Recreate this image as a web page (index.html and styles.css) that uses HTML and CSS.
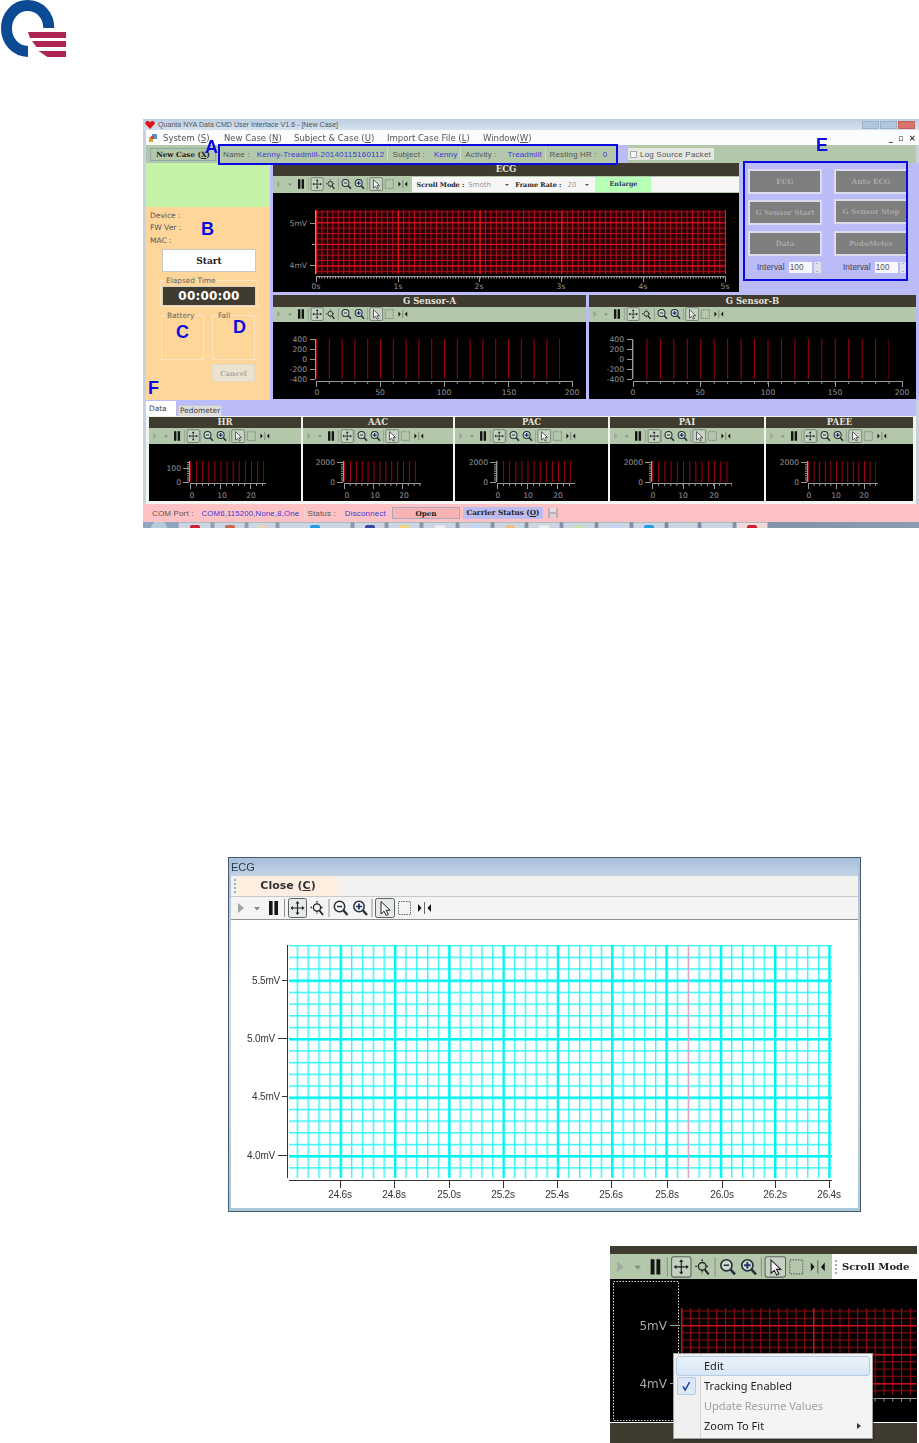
FILE: index.html
```html
<!DOCTYPE html>
<html lang="en">
<head>
<meta charset="utf-8">
<title>Quanta NYA Data CMD User Interface</title>
<link rel="stylesheet" href="styles.css">
</head>
<body>
<svg class="sprite" aria-hidden="true">
  <defs>
    <g id="tb-a">
      <path d="M3 7l6 5-6 5z" fill="#9fa8a0"/>
      <path d="M19 11h6l-3 3.5z" fill="#808880"/>
      <path d="M34 5h3.6v14H34zM39.4 5H43v14h-3.6z" fill="#151515"/>
      <path d="M49.5 3v18" stroke="#8a948a"/>
      <rect x="53.5" y="2.5" width="18" height="19" rx="2" fill="#d8ddd8" fill-opacity=".45" stroke="#5c6660"/>
      <path d="M56.5 12h12M62.5 6v12" stroke="#222" stroke-width="1.1"/>
      <path d="M62.5 5l-2 2.5h4zM62.5 19l-2-2.5h4zM55.500 12l2.500-2v4zM69.500 12l-2.500-2v4z" fill="#222"/>
    </g>
    <g id="tb-za">
      <circle cx="82" cy="11.500" r="3.600" fill="none" stroke="#222" stroke-width="1.300"/>
      <path d="M82 5v3M82 15v3M75.500 11.500h2.500M86 11.500h2.500" stroke="#222" stroke-width="1.300" stroke-dasharray="1.500 1"/>
      <path d="M84.500 14.500l3.500 4.500" stroke="#222" stroke-width="1.800"/>
    </g>
    <g id="tb-b">
      <path d="M94 3v18" stroke="#8a948a"/>
      <circle cx="104.500" cy="10.500" r="5.200" fill="#fff" fill-opacity=".35" stroke="#24303c" stroke-width="1.500"/>
      <path d="M102 10.500h5" stroke="#24303c" stroke-width="1.500"/>
      <path d="M108.500 14.500l4 4.500" stroke="#24303c" stroke-width="2.300"/>
      <circle cx="124" cy="10.500" r="5.200" fill="#fff" fill-opacity=".35" stroke="#24303c" stroke-width="1.500"/>
      <path d="M121 10.500h6M124 7.500v6" stroke="#1a2e70" stroke-width="1.700"/>
      <path d="M128 14.500l4 4.500" stroke="#24303c" stroke-width="2.300"/>
      <path d="M137 3v18" stroke="#8a948a"/>
      <rect x="140.500" y="2.500" width="19" height="19" rx="2" fill="#d8ddd8" fill-opacity=".5" stroke="#5c6660"/>
      <path d="M146 5.500v12.500l3-2.800 2.300 4.300 2-1-2.200-4.200h4z" fill="#f4f6f4" stroke="#222"/>
      <rect x="163.500" y="5.500" width="12" height="13" fill="none" stroke="#666" stroke-dasharray="1.500 1"/>
      <path d="M183 8v8l3.500-4zM196 8v8l-3.500-4z" fill="#151515"/>
      <path d="M189.500 6v12" stroke="#666"/>
    </g>
    <symbol id="tools" viewBox="0 0 198 24">
      <use href="#tb-a"/><use href="#tb-za"/><use href="#tb-b"/>
    </symbol>
    <symbol id="tools-s" viewBox="0 0 177 24">
      <use href="#tb-a"/><use href="#tb-b" x="-20.800"/>
    </symbol>
  </defs>
</svg>

<header class="logo-row">
  <svg class="logo" viewBox="0 0 67 58" role="img" aria-label="Quanta logo">
    <path d="M48.800 28C48.800 15 39.500 5.600 27.500 5.600S6.500 15.500 6.500 28.500 16 51.400 28 51.400" fill="none" stroke="#0c4a94" stroke-width="11"/>
    <path d="M28 32h38v6H30zM32 41h34v6H36.500zM38.500 51H66v6H47.500z" fill="#ae2450"/>
  </svg>
</header>

<figure class="app">
  <div class="win-title">
    <svg class="heart" viewBox="0 0 12 10"><path d="M6 10L.6 4.200C-.8 2 1 0 3 0c1.300 0 2.400.8 3 1.800C6.600.8 7.700 0 9 0c2 0 3.800 2 2.400 4.200z" fill="#e01418"/></svg>
    <span class="win-name">Quanta NYA Data CMD User Interface V1.6 - [New Case]</span>
    <span class="win-btns"><i class="wb"></i><i class="wb"></i><i class="wb wb-x"></i></span>
  </div>
  <nav class="menu">
    <svg class="menu-ic" viewBox="0 0 8 8"><path d="M0 3h4v5H0z" fill="#e0a030"/><path d="M3 0h5v5H3z" fill="#6090d0"/><path d="M2 2h3v3H2z" fill="#d04040"/></svg>
    <span class="m1">System (<u>S</u>)</span>
    <span class="m2">New Case (<u>N</u>)</span>
    <span class="m3">Subject &amp; Case (<u>U</u>)</span>
    <span class="m4">Import Case File (<u>L</u>)</span>
    <span class="m5">Window(<u>W</u>)</span>
    <span class="mdi">_&#9643;&#215;</span>
  </nav>
  <div class="bar">
    <button class="newcase" type="button">New Case (<u>X</u>)</button>
    <div class="info">
      <span class="lbl">Name :</span><b class="val v-name">Kenny-Treadmill-20140115160112</b><i class="sep"></i>
      <span class="lbl">Subject :</span><b class="val v-sub">Kenny</b><i class="sep"></i>
      <span class="lbl">Activity :</span><b class="val v-act">Treadmill</b><i class="sep"></i>
      <span class="lbl">Resting HR :</span><b class="val v-hr">0</b>
    </div>
    <div class="gap-lav"></div>
    <label class="logsrc"><i class="chk"></i>Log Source Packet</label>
  </div>

  <div class="main">
    <aside class="left">
      <div class="left-top"></div>
      <div class="left-body">
        <p class="dev">Device :</p>
        <p class="dev">FW Ver :</p>
        <p class="dev">MAC :</p>
        <button class="start" type="button">Start</button>
        <div class="elapsed">
          <span class="cap">Elapsed Time</span>
          <output class="clock">00:00:00</output>
        </div>
        <div class="gauges">
          <div class="gauge"><span class="cap">Battery</span></div>
          <div class="gauge"><span class="cap">Fall</span></div>
        </div>
        <button class="cancel" type="button">Cancel</button>
      </div>
    </aside>

    <div class="center">
      <div class="top-row">
        <section class="panel panel-ecg">
          <h3 class="ph">ECG</h3>
          <div class="tb tb-ecg">
            <svg class="tools"><use href="#tools"/></svg>
            <div class="tb-white">
              <b class="sm-b">Scroll Mode :</b><span class="sel sel-1">Smoth<i class="dd"></i></span>
              <b class="sm-b">Frame Rate :</b><span class="sel sel-2">20<i class="dd"></i></span>
              <b class="enlarge">Enlarge</b>
            </div>
          </div>
          <svg class="plot plot-ecg" viewBox="0 0 466 99">
            <defs>
              <pattern id="e1m" width="5.450" height="5.400" patternUnits="userSpaceOnUse" x="43" y="7.700"><path d="M.5 0v5.400M0 .5h5.450" stroke="#b8101c" fill="none"/></pattern>
              <pattern id="e1M" width="81.800" height="21.600" patternUnits="userSpaceOnUse" x="43" y="7.700"><path d="M.5 0v21.600M0 .5h81.800" stroke="#f01420" fill="none"/></pattern>
            </defs>
            <rect x="43" y="17" width="410" height="64" fill="#2a0006"/>
            <rect x="43" y="17" width="410" height="64" fill="url(#e1m)"/>
            <rect x="43" y="17" width="410" height="64" fill="url(#e1M)"/>
            <path class="axis" d="M42.500 17v64M37 30.500h5M39 51.500h3M37 72.500h5M43 83.500h409M43.500 83v6M125.500 83v6M206.500 83v6M288.500 83v6M370.500 83v6M452.500 83v6"/>
            <path class="axis-d" d="M43 84.500h409" stroke-dasharray="1 1.730"/>
            <g class="ax">
              <text x="34" y="33" text-anchor="end">5mV</text>
              <text x="34" y="75" text-anchor="end">4mV</text>
              <text x="43" y="96" text-anchor="middle">0s</text><text x="125" y="96" text-anchor="middle">1s</text><text x="206" y="96" text-anchor="middle">2s</text><text x="288" y="96" text-anchor="middle">3s</text><text x="370" y="96" text-anchor="middle">4s</text><text x="452" y="96" text-anchor="middle">5s</text>
            </g>
          </svg>
        </section>
        <div class="controls">
          <button class="ctl" type="button">ECG</button>
          <button class="ctl" type="button">Auto ECG</button>
          <button class="ctl" type="button">G Sensor Start</button>
          <button class="ctl ctl-up" type="button">G Sensor Stop</button>
          <button class="ctl" type="button">Data</button>
          <button class="ctl" type="button">PedoMeter</button>
          <div class="intv"><span>Interval</span><b class="num">100</b><i class="spin"></i></div>
          <div class="intv"><span>Interval</span><b class="num">100</b><i class="spin"></i></div>
        </div>
      </div>
      <div class="gs-row">
        <section class="panel panel-a">
          <h3 class="ph">G Sensor-A</h3>
          <div class="tb"><svg class="tools"><use href="#tools"/></svg></div>
          <svg class="plot plot-gs" viewBox="0 0 313 77">
            <line class="stem" x1="43" x2="287" y1="37" y2="37" stroke-width="40" stroke-dasharray="1 11.800"/>
            <path class="axis" d="M42.500 17v40M37 17.500h5M37 27.500h5M37 37.500h5M37 47.500h5M37 57.500h5M43 59.500h256M43.500 59v6M107.500 59v6M171.500 59v6M235.500 59v6M299.500 59v6"/>
            <line class="axis" x1="43" x2="299" y1="61" y2="61" stroke-width="2" stroke-dasharray="1 11.800"/>
            <g class="ax">
              <text x="34" y="20" text-anchor="end">400</text><text x="34" y="30" text-anchor="end">200</text><text x="34" y="40" text-anchor="end">0</text><text x="34" y="50" text-anchor="end">-200</text><text x="34" y="60" text-anchor="end">-400</text>
              <text x="44" y="73" text-anchor="middle">0</text><text x="107" y="73" text-anchor="middle">50</text><text x="171" y="73" text-anchor="middle">100</text><text x="236" y="73" text-anchor="middle">150</text><text x="299" y="73" text-anchor="middle">200</text>
            </g>
          </svg>
        </section>
        <section class="panel panel-b">
          <h3 class="ph">G Sensor-B</h3>
          <div class="tb"><svg class="tools"><use href="#tools"/></svg></div>
          <svg class="plot plot-gs" viewBox="0 0 327 77">
            <line class="stem" x1="44" x2="300" y1="37" y2="37" stroke-width="40" stroke-dasharray="1 12.450"/>
            <path class="axis" d="M43.500 17v40M38 17.500h5M38 27.500h5M38 37.500h5M38 47.500h5M38 57.500h5M44 59.500h269M44.500 59v6M111.500 59v6M179.500 59v6M246.500 59v6M313.500 59v6"/>
            <line class="axis" x1="44" x2="313" y1="61" y2="61" stroke-width="2" stroke-dasharray="1 12.450"/>
            <g class="ax">
              <text x="35" y="20" text-anchor="end">400</text><text x="35" y="30" text-anchor="end">200</text><text x="35" y="40" text-anchor="end">0</text><text x="35" y="50" text-anchor="end">-200</text><text x="35" y="60" text-anchor="end">-400</text>
              <text x="44" y="73" text-anchor="middle">0</text><text x="111" y="73" text-anchor="middle">50</text><text x="179" y="73" text-anchor="middle">100</text><text x="246" y="73" text-anchor="middle">150</text><text x="313" y="73" text-anchor="middle">200</text>
            </g>
          </svg>
        </section>
      </div>
    </div>
  </div>

  <div class="tabs">
    <span class="tab tab-on">Data</span>
    <span class="tab">Pedometer</span>
  </div>
  <div class="small-row">
    <section class="panel">
      <h3 class="ph">HR</h3>
      <div class="tb"><svg class="tools-s"><use href="#tools-s"/></svg></div>
      <svg class="plot plot-s" viewBox="0 0 152 57">
        <line class="stem" x1="41" x2="115" y1="27.500" y2="27.500" stroke-width="21" stroke-dasharray="1 5.100"/>
        <path class="axis" d="M40.500 17v21M34 24.500h6M34 38.500h6M41 39.500h76M41.500 39v6M71.500 39v6M101.500 39v6"/>
        <line class="axis" x1="39" x2="39" y1="18" y2="38" stroke-width="2" stroke-dasharray="1 1.200"/>
        <line class="axis" x1="41" x2="117" y1="41" y2="41" stroke-width="2" stroke-dasharray="1 5"/>
        <g class="ax"><text x="32" y="27" text-anchor="end">100</text><text x="32" y="41" text-anchor="end">0</text><text x="43" y="54" text-anchor="middle">0</text><text x="73" y="54" text-anchor="middle">10</text><text x="102" y="54" text-anchor="middle">20</text></g>
      </svg>
    </section>
    <section class="panel">
      <h3 class="ph">AAC</h3>
      <div class="tb"><svg class="tools-s"><use href="#tools-s"/></svg></div>
      <svg class="plot plot-s" viewBox="0 0 150 57">
        <line class="stem" x1="41" x2="113" y1="27.500" y2="27.500" stroke-width="21" stroke-dasharray="1 4.900"/>
        <path class="axis" d="M40.500 17v21M34 18.500h6M34 38.500h6M41 39.500h77M41.500 39v6M70.500 39v6M99.500 39v6"/>
        <line class="axis" x1="39" x2="39" y1="18" y2="38" stroke-width="2" stroke-dasharray="1 1.200"/>
        <line class="axis" x1="41" x2="118" y1="41" y2="41" stroke-width="2" stroke-dasharray="1 4.800"/>
        <g class="ax"><text x="32" y="21" text-anchor="end">2000</text><text x="32" y="41" text-anchor="end">0</text><text x="44" y="54" text-anchor="middle">0</text><text x="72" y="54" text-anchor="middle">10</text><text x="101" y="54" text-anchor="middle">20</text></g>
      </svg>
    </section>
    <section class="panel">
      <h3 class="ph">PAC</h3>
      <div class="tb"><svg class="tools-s"><use href="#tools-s"/></svg></div>
      <svg class="plot plot-s" viewBox="0 0 153 57">
        <line class="stem" x1="42" x2="116" y1="27.500" y2="27.500" stroke-width="21" stroke-dasharray="1 5.100"/>
        <path class="axis" d="M41.500 17v21M35 18.500h6M35 38.500h6M42 39.500h78M42.500 39v6M72.500 39v6M102.500 39v6"/>
        <line class="axis" x1="40" x2="40" y1="18" y2="38" stroke-width="2" stroke-dasharray="1 1.200"/>
        <line class="axis" x1="42" x2="120" y1="41" y2="41" stroke-width="2" stroke-dasharray="1 5"/>
        <g class="ax"><text x="33" y="21" text-anchor="end">2000</text><text x="33" y="41" text-anchor="end">0</text><text x="43" y="54" text-anchor="middle">0</text><text x="73" y="54" text-anchor="middle">10</text><text x="103" y="54" text-anchor="middle">20</text></g>
      </svg>
    </section>
    <section class="panel">
      <h3 class="ph">PAI</h3>
      <div class="tb"><svg class="tools-s"><use href="#tools-s"/></svg></div>
      <svg class="plot plot-s" viewBox="0 0 154 57">
        <line class="stem" x1="42" x2="118" y1="27.500" y2="27.500" stroke-width="21" stroke-dasharray="1 5.200"/>
        <path class="axis" d="M41.500 17v21M35 18.500h6M35 38.500h6M42 39.500h80M42.500 39v6M73.500 39v6M104.500 39v6"/>
        <line class="axis" x1="40" x2="40" y1="18" y2="38" stroke-width="2" stroke-dasharray="1 1.200"/>
        <line class="axis" x1="42" x2="122" y1="41" y2="41" stroke-width="2" stroke-dasharray="1 5.100"/>
        <g class="ax"><text x="33" y="21" text-anchor="end">2000</text><text x="33" y="41" text-anchor="end">0</text><text x="43" y="54" text-anchor="middle">0</text><text x="73" y="54" text-anchor="middle">10</text><text x="104" y="54" text-anchor="middle">20</text></g>
      </svg>
    </section>
    <section class="panel">
      <h3 class="ph">PAEE</h3>
      <div class="tb"><svg class="tools-s"><use href="#tools-s"/></svg></div>
      <svg class="plot plot-s" viewBox="0 0 147 57">
        <line class="stem" x1="42" x2="110" y1="27.500" y2="27.500" stroke-width="21" stroke-dasharray="1 4.600"/>
        <path class="axis" d="M41.500 17v21M35 18.500h6M35 38.500h6M42 39.500h70M42.500 39v6M70.500 39v6M98.500 39v6"/>
        <line class="axis" x1="40" x2="40" y1="18" y2="38" stroke-width="2" stroke-dasharray="1 1.200"/>
        <line class="axis" x1="42" x2="112" y1="41" y2="41" stroke-width="2" stroke-dasharray="1 4.600"/>
        <g class="ax"><text x="33" y="21" text-anchor="end">2000</text><text x="33" y="41" text-anchor="end">0</text><text x="43" y="54" text-anchor="middle">0</text><text x="70" y="54" text-anchor="middle">10</text><text x="98" y="54" text-anchor="middle">20</text></g>
      </svg>
    </section>
  </div>
  <div class="status">
    <span class="lbl">COM Port :</span>
    <b class="st-v st-com">COM6,115200,None,8,One</b>
    <i class="sep"></i>
    <span class="lbl">Status :</span>
    <b class="st-v st-dis">Disconnect</b>
    <button class="open" type="button">Open</button>
    <b class="carrier">Carrier Status (<u>O</u>)</b>
    <svg class="disk" viewBox="0 0 10 10"><path d="M0 0h10v10H0z" fill="#c0b0b4"/><path d="M2 0h6v4H2z" fill="#e8dce0"/><path d="M2 6h6v4H2z" fill="#dcd0d4"/></svg>
  </div>
  <div class="taskbar">
    <i class="tk-orb"></i>
    <i class="tk w33 d-red"></i><i class="tk w31 d-br"></i><i class="tk w28 d-tan"></i><i class="tk w72 d-cy"></i><i class="tk w31 d-nv"></i><i class="tk w32 d-yl"></i><i class="tk w33 d-gr"></i><i class="tk w32 d-lb"></i><i class="tk w31 d-or"></i><i class="tk w32 d-gr"></i><i class="tk w32 d-lg"></i><i class="tk w32 d-lb"></i><i class="tk w32 d-cy"></i><i class="tk w30 d-none"></i><i class="tk w32 d-none"></i><i class="tk w32 d-red tk-pink"></i>
  </div>

  <div class="frame frame-a"></div>
  <div class="frame frame-e"></div>
  <span class="mark mark-a">A</span>
  <span class="mark mark-b">B</span>
  <span class="mark mark-c">C</span>
  <span class="mark mark-d">D</span>
  <span class="mark mark-e">E</span>
  <span class="mark mark-f">F</span>
</figure>

<figure class="ecgwin">
  <div class="ew-title">ECG</div>
  <div class="ew-menu"><i class="grip"></i><b class="close-btn">Close (<u>C</u>)</b></div>
  <div class="ew-tools"><svg class="tools-l"><use href="#tools"/></svg></div>
  <svg class="ew-plot" viewBox="0 0 627 288">
    <defs>
      <pattern id="e2m" width="10.860" height="11.700" patternUnits="userSpaceOnUse" x=".5" y="1.500"><path d="M.7 0v11.700M0 .7h10.860" stroke="#30f6f6" stroke-width="1.400" fill="none"/></pattern>
      <pattern id="e2M" width="54.300" height="58.500" patternUnits="userSpaceOnUse" x="0" y="1"><path d="M1.200 0v58.500M0 1.200h54.300" stroke="#00f4f4" stroke-width="2.400" fill="none"/></pattern>
    </defs>
    <rect x="58" y="25" width="543" height="233" fill="url(#e2m)"/>
    <rect x="58" y="25" width="543" height="233" fill="url(#e2M)"/>
    <path class="pink" d="M457.500 25v233"/>
    <path class="ew-axis" d="M56.500 25v233M51 60.500h5M47 118.500h9M51 176.500h5M47 235.500h9M58 260.500h543M109.500 261v7M163.500 261v7M218.500 261v7M272.500 261v7M326.500 261v7M380.500 261v7M436.500 261v7M491.500 261v7M544.500 261v7M598.500 261v7"/>
    <g class="ew-ax">
      <text x="49" y="64" text-anchor="end">5.5mV</text><text x="44" y="122" text-anchor="end">5.0mV</text><text x="49" y="180" text-anchor="end">4.5mV</text><text x="44" y="239" text-anchor="end">4.0mV</text>
      <text x="109" y="278" text-anchor="middle">24.6s</text><text x="163" y="278" text-anchor="middle">24.8s</text><text x="218" y="278" text-anchor="middle">25.0s</text><text x="272" y="278" text-anchor="middle">25.2s</text><text x="326" y="278" text-anchor="middle">25.4s</text><text x="380" y="278" text-anchor="middle">25.6s</text><text x="436" y="278" text-anchor="middle">25.8s</text><text x="491" y="278" text-anchor="middle">26.0s</text><text x="544" y="278" text-anchor="middle">26.2s</text><text x="598" y="278" text-anchor="middle">26.4s</text>
    </g>
  </svg>
</figure>

<figure class="crop">
  <div class="crop-top"></div>
  <div class="crop-tb">
    <svg class="tools-m"><use href="#tools"/></svg>
    <div class="crop-white"><i class="grip"></i><b>Scroll Mode</b></div>
  </div>
  <svg class="crop-plot" viewBox="0 0 307 143">
    <defs>
      <pattern id="e3m" width="8.800" height="7.250" patternUnits="userSpaceOnUse" x="71" y="17"><path d="M.6 0v7.250M0 .6h8.800" stroke="#8c0a14" stroke-width="1.200" fill="none"/></pattern>
      <pattern id="e3M" width="132" height="29" patternUnits="userSpaceOnUse" x="71" y="17"><path d="M.7 0v29M0 .7h132" stroke="#d01018" stroke-width="1.400" fill="none"/></pattern>
    </defs>
    <rect x="71" y="29" width="236" height="87" fill="url(#e3m)"/>
    <rect x="71" y="29" width="236" height="87" fill="url(#e3M)"/>
    <rect class="dots" x="3.500" y="2.500" width="65" height="139"/>
    <path class="axis" d="M60 46.500h10M60 104.500h10M71 119.500h236"/>
    <line class="axis" x1="71" x2="307" y1="121" y2="121" stroke-width="3" stroke-dasharray="1 7.800"/>
    <g class="crop-ax"><text x="57" y="51" text-anchor="end">5mV</text><text x="57" y="109" text-anchor="end">4mV</text></g>
  </svg>
  <div class="crop-bottom"></div>
  <ul class="ctx">
    <li class="ctx-hot">Edit</li>
    <li><svg class="tick" viewBox="0 0 19 18"><path d="M5.500 9.500l2.500 4 5-9" fill="none" stroke="#1c3fa0" stroke-width="1.700"/></svg>Tracking Enabled</li>
    <li class="ctx-off">Update Resume Values</li>
    <li>Zoom To Fit<i class="ctx-arr"></i></li>
  </ul>
</figure>
</body>
</html>
```

FILE: styles.css
```css
* { box-sizing: border-box; }
html, body { margin: 0; padding: 0; background: #fff; }
body { width: 919px; height: 1443px; overflow: hidden; font-family: "Liberation Sans", Arial, sans-serif; }
figure { margin: 0; }
h3, p, ul { margin: 0; padding: 0; }
i { font-style: normal; }
button { padding: 0; font: inherit; }
.sprite { display: block; width: 0; height: 0; }

.logo-row { height: 119px; }
.logo { display: block; width: 67px; height: 58px; }

/* ---------- first figure: main application window ---------- */
.app { position: relative; width: 776px; margin-left: 143px; height: 409px; filter: blur(.4px); background: #c8d2dc; padding: 0 0 0 3px; font-size: 8px; color: #555; }
.win-title { height: 11px; margin-left: -3px; display: flex; align-items: center; background: linear-gradient(#bdcfe2, #d5e2ee); font-size: 7.100px; color: #555; }
.heart { width: 10px; height: 8px; margin-left: 2px; }
.win-name { margin-left: 3px; }
.win-btns { margin-left: auto; display: flex; margin-right: 4px; gap: 1px; }
.wb { width: 17px; height: 8px; background: #b2c6dc; border: 1px solid #9fb4ca; }
.wb-x { background: #d8756c; border-color: #c46058; }

.menu { height: 15px; display: flex; align-items: center; background: #fafcfd; font-family: "DejaVu Sans", sans-serif; font-size: 8.500px; color: #555; position: relative; }
.menu-ic { width: 8px; height: 8px; margin-left: 3px; }
.m1 { margin-left: 6px; width: 61px; }
.m2 { width: 70px; }
.m3 { width: 93px; }
.m4 { width: 96px; }
.mdi { margin-left: auto; margin-right: -2px; font-weight: bold; letter-spacing: 5px; color: #333; }

.bar { height: 18px; display: flex; align-items: center; background: #b3c7ab; margin-right: 3px; }
.newcase { width: 66px; height: 13px; margin-left: 4px; font-family: "DejaVu Serif", serif; font-weight: bold; font-size: 7.200px; color: #222; background: #b3c7ab; border: 1px solid #90a8a8; }
.info { width: 397px; margin-left: 3px; display: flex; align-items: center; font-size: 8px; color: #555; letter-spacing: .15px; }
.lbl { margin-left: 4px; white-space: nowrap; }
.val { font-weight: normal; color: #3a3ad8; white-space: nowrap; }
.sep { width: 1px; height: 13px; background: #d0dccc; margin-left: 3px; }
.v-name { margin-left: 7px; letter-spacing: .2px; }
.v-sub { margin-left: 9px; }
.v-act { margin-left: 11px; }
.v-hr { margin-left: 6px; }
.gap-lav { width: 12px; height: 100%; background: #bbbbf8; }
.logsrc { width: 86px; height: 12px; display: flex; align-items: center; background: #e4e8e0; font-size: 8px; letter-spacing: .2px; color: #555; }
.chk { width: 7px; height: 7px; margin: 0 3px 0 2px; background: #f4f4f4; border: 1px solid #aaa; }

.main { height: 237px; display: flex; background: #bbbbf8; }
.left { width: 124px; display: flex; flex-direction: column; }
.left-top { height: 44px; background: #c4f2a8; }
.left-body { flex: 1; background: #fed69a; padding: 3px 0 0 4px; font-family: "DejaVu Sans", sans-serif; font-size: 7.500px; position: relative; }
.dev { height: 12.400px; line-height: 12.400px; color: #555; }
.start { display: block; width: 94px; height: 23px; margin: 2px 0 0 12px; background: #fff; border: 1px solid #c8c8c8; font-family: "DejaVu Serif", serif; font-weight: bold; font-size: 9px; color: #222; }
.elapsed { position: relative; width: 98px; height: 27px; margin: 8px 0 0 10px; border: 1px solid #fde4bc; padding: 5px 1px 0; }
.cap { position: absolute; top: -5px; left: 4px; background: #fed69a; padding: 0 1px; line-height: 9px; font-size: 7.400px; color: #666; }
.clock { display: block; height: 20px; line-height: 18px; text-align: center; background: #3f3b2e; border: 1px solid #d8d4c0; color: #fff; font-family: "DejaVu Sans", sans-serif; font-weight: bold; font-size: 12px; letter-spacing: .2px; }
.gauges { display: flex; gap: 8px; margin: 8px 0 0 11px; }
.gauge { position: relative; width: 43px; height: 45px; border: 1px solid #fde4bc; }
.cancel { display: block; width: 43px; height: 18px; margin: 4px 0 0 62px; background: #ece2d0; border: 1px solid #e2d8c4; font-family: "DejaVu Serif", serif; font-weight: bold; font-size: 7px; color: #aaa; }

.center { flex: 1; padding-left: 3px; padding-right: 3px; }
.top-row { display: flex; height: 132px; }
.panel { display: flex; flex-direction: column; min-width: 0; }
.panel-ecg { width: 466px; height: 129px; }
.ph { height: 12px; line-height: 12px; background: #3f3b2e; color: #e4e2da; font-family: "DejaVu Serif", serif; font-weight: bold; font-size: 8.500px; text-align: center; }
.panel-ecg .ph { height: 13px; }
.tb { height: 15px; flex: none; background: #b3c7ab; display: flex; align-items: center; }
.tb-ecg { height: 17px; }
.small-row .tb { height: 16px; }
.tools { width: 133.600px; height: 16.200px; margin-left: 2px; flex: none; }
.tools-s { width: 119.500px; height: 16.200px; margin-left: 2.400px; flex: none; }
.tb-white { height: 15px; margin-left: 3px; flex: 1; background: #f6f6f4; display: flex; align-items: center; font-family: "DejaVu Serif", serif; font-size: 6.400px; color: #222; padding-left: 5px; }
.sm-b { white-space: nowrap; }
.sel { position: relative; width: 47px; margin-left: 4px; color: #999; font-family: "DejaVu Sans", sans-serif; font-size: 7px; }
.sel-2 { width: 28px; margin-left: 6px; }
.dd { position: absolute; right: 6px; top: 3px; border: 2px solid transparent; border-top-color: #555; }
.enlarge { width: 56px; height: 15px; line-height: 15px; text-align: center; background: #b8ffb8; color: #336; }
.plot { display: block; background: #000; width: 100%; }
.plot-ecg { height: 99px; }
.plot-gs { height: 77px; }
.plot-s { height: 57px; }
.axis { stroke: #999; fill: none; }
.axis-d { stroke: #bbb; fill: none; stroke-width: 2px; }
.stem { stroke: #a00014; }
.ax text { font: 7.600px "DejaVu Sans", sans-serif; fill: #969696; }

.controls { flex: 1; display: grid; grid-template-columns: 74px 74px; column-gap: 12px; grid-auto-rows: 25px; row-gap: 6px; padding: 6px 0 0 9px; align-content: start; }
.ctl { background: #7e7e7e; border: 2px solid #dcdcec; font-family: "DejaVu Serif", serif; font-weight: bold; font-size: 7.200px; color: #a8a8a8; white-space: nowrap; }
.ctl-up { margin-top: -1px; height: 25px; }
.intv { display: flex; align-items: center; height: 15px; margin-top: -2px; font-size: 8.200px; color: #444; padding-left: 9px; letter-spacing: .1px; }
.num { width: 23px; height: 11px; line-height: 11px; margin-left: 4px; padding-left: 1px; background: #f8f8fc; font-weight: normal; color: #555; }
.spin { position: relative; width: 7px; height: 11px; background: #e0e0ea; margin-left: 2px; }
.spin::before, .spin::after { content: ""; position: absolute; left: 2px; border: 1.500px solid transparent; }
.spin::before { top: 0; border-bottom-color: #888; }
.spin::after { bottom: 0; border-top-color: #888; }

.gs-row { display: flex; gap: 3px; }
.panel-a { width: 313px; }
.panel-b { width: 327px; }

.tabs { height: 16px; background: #bbbbf8; display: flex; align-items: flex-end; margin-right: 3px; font-family: "DejaVu Sans", sans-serif; font-size: 7.400px; color: #444; }
.tab { height: 11px; line-height: 10px; padding: 0 1px 0 1px; margin-left: 2px; background: #dcdcdc; border: 1px solid #c8c8d8; border-bottom: 0; }
.tab-on { height: 15px; line-height: 15px; width: 30px; margin-left: 0; padding: 0 0 0 3px; background: #fff; border: 0; }
.small-row { height: 88px; display: grid; grid-template-columns: 152px 150px 153px 154px 147px; column-gap: 2px; background: #f2f4f0; padding: 1px 6px 0 3px; margin-right: 3px; align-content: start; }
.small-row .ph { height: 11px; line-height: 11px; }

.status { height: 18px; margin-left: -3px; padding-left: 9px; display: flex; align-items: center; background: #ffc2c4; font-size: 8px; color: #555; letter-spacing: .15px; }
.status .lbl { margin-left: 0; }
.st-v { font-weight: normal; color: #3a3ad8; white-space: nowrap; }
.st-com { margin-left: 8px; width: 102px; font-size: 7.800px; }
.status .sep { margin-left: 0; background: #f0d8d8; }
.status .sep + .lbl { margin-left: 3px; }
.st-dis { margin-left: 9px; }
.open { width: 68px; height: 12px; margin-left: 6px; background: #f8b4b4; border: 1px solid #a8a8c0; font-family: "DejaVu Serif", serif; font-weight: bold; font-size: 7.200px; color: #222; }
.carrier { margin-left: 3px; width: 80px; height: 12px; line-height: 12px; text-align: center; background: #bcbcf0; font-family: "DejaVu Serif", serif; font-size: 7.200px; color: #222; white-space: nowrap; letter-spacing: 0; }
.disk { width: 10px; height: 10px; margin-left: 5px; }

.taskbar { height: 6px; margin-left: -3px; display: flex; gap: 3px; background: linear-gradient(90deg, #8ea2b8, #7c8ea6 70%, #8a9cb0); overflow: hidden; }
.tk-orb { width: 32px; flex: none; background: radial-gradient(circle at 50% 120%, #b8cce0 45%, #8ea6c0 48%); }
.tk { position: relative; height: 6px; flex: none; background: #ccd6e2; border: 1px solid #aeb9c6; border-bottom: 0; }
.tk::after { content: ""; position: absolute; left: 50%; top: 2px; width: 10px; height: 4px; margin-left: -5px; border-radius: 2px 2px 0 0; background: var(--dab); }
.w28 { width: 28px; }
.w30 { width: 30px; }
.w31 { width: 31px; }
.w32 { width: 32px; }
.w33 { width: 33px; }
.w72 { width: 72px; }
.d-red { --dab: #d02030; }
.d-br { --dab: #c86850; }
.d-tan { --dab: #e4d8b8; }
.d-cy { --dab: #20a0e0; }
.d-nv { --dab: #3848a8; }
.d-yl { --dab: #f0d880; }
.d-gr { --dab: #ececec; }
.d-or { --dab: #f0bc88; }
.d-lg { --dab: #c4e4b4; }
.d-lb { --dab: #c0d8f4; }
.d-none { --dab: #ccd6e2; }
.tk-pink { background: #f2d8d8; }

.frame { position: absolute; border: 2px solid #0a0ae0; }
.frame-a { left: 75px; top: 25px; width: 400px; height: 21px; }
.frame-e { left: 600px; top: 42px; width: 165px; height: 120px; }
.mark { position: absolute; font-size: 18px; line-height: 18px; font-weight: bold; color: #0a0ae0; }
.mark-a { left: 62px; top: 19px; }
.mark-b { left: 58px; top: 101px; }
.mark-c { left: 33px; top: 204px; }
.mark-d { left: 90px; top: 199px; }
.mark-e { left: 673px; top: 17px; }
.mark-f { left: 5px; top: 260px; }

/* ---------- second figure: enlarged ECG window ---------- */
.ecgwin { width: 633px; height: 355px; margin: 329px 0 0 228px; padding: 1px 2px 3px; border: 1px solid #4a5a6a; background: linear-gradient(#a8c0dc, #d0dde8 40%, #a8c8dc); display: flex; flex-direction: column; filter: blur(.3px); }
.ew-title { height: 17px; line-height: 17px; font-size: 11px; color: #2c3a48; background: linear-gradient(#a8c0dc, #c4d4e4); }
.ew-menu { height: 20px; display: flex; align-items: center; background: #f2f2f0; font-family: "DejaVu Sans", sans-serif; font-size: 11px; color: #222; }
.grip { width: 2px; height: 14px; margin-left: 3px; border-left: 2px dotted #aaa; }
.close-btn { width: 100px; height: 20px; line-height: 20px; margin-left: 2px; text-align: center; background: #fdeee0; color: #333; }
.ew-tools { height: 24px; flex: none; display: flex; align-items: center; background: #f4f4f4; border-top: 1px solid #c8c8c8; border-bottom: 1px solid #909090; }
.tools-l { width: 198px; height: 24px; margin-left: 4px; }
.ew-plot { display: block; background: #fff; flex: 1; width: 627px; height: 288px; }
.ew-axis { stroke: #333; fill: none; }
.pink { stroke: #d8a8c8; fill: none; }
.ew-ax text { font: 10px "Liberation Sans", sans-serif; fill: #333; letter-spacing: -.2px; }

/* ---------- third figure: context-menu detail ---------- */
.crop { position: relative; width: 307px; height: 197px; margin: 34px 0 0 610px; background: #3f3b2e; filter: blur(.3px); }
.crop-top { height: 8px; }
.crop-tb { height: 25px; display: flex; align-items: center; background: #b3c7ab; }
.tools-m { width: 213px; height: 25.800px; margin-left: 4px; flex: none; }
.crop-white { flex: 1; height: 25px; margin-left: 5px; display: flex; align-items: center; background: #fcfcfa; font-family: "DejaVu Serif", serif; font-size: 10px; color: #222; white-space: nowrap; overflow: hidden; }
.crop-white b { margin-left: 5px; }
.crop-plot { display: block; width: 307px; height: 144px; background: #000; border-bottom: 1px solid #fff; }
.dots { fill: none; stroke: #ddd; stroke-dasharray: 1.500 1.500; }
.crop-ax text { font: 12px "DejaVu Sans", sans-serif; fill: #a8a8a8; }
.crop-bottom { height: 20px; background: #3f3b2e; }
.ctx { position: absolute; left: 63px; top: 107px; width: 200px; height: 86px; padding: 2px 2px; list-style: none; background: linear-gradient(90deg, #f0f0f0 26px, #d8d8d8 26px, #d8d8d8 27px, #f4f4f4 27px); border: 1px solid #a0a0a0; box-shadow: 1px 1px 2px rgba(0,0,0,.3); font-family: "Noto Sans", sans-serif; font-size: 11px; color: #222; }
.ctx li { position: relative; height: 20px; line-height: 20px; padding-left: 28px; }
.ctx-hot { background: linear-gradient(#eaf2fa, #d8e6f4); border: 1px solid #b4cce6; border-radius: 3px; line-height: 18px !important; padding-left: 27px !important; }
.ctx-off { color: #a0a0a0; }
.tick { position: absolute; left: 1px; top: 1px; width: 19px; height: 18px; background: #dce8f6; border: 1px solid #b0cce8; border-radius: 2px; }
.ctx-arr { position: absolute; right: 9px; top: 7px; border: 3px solid transparent; border-left: 4px solid #333; border-right: 0; }
```
